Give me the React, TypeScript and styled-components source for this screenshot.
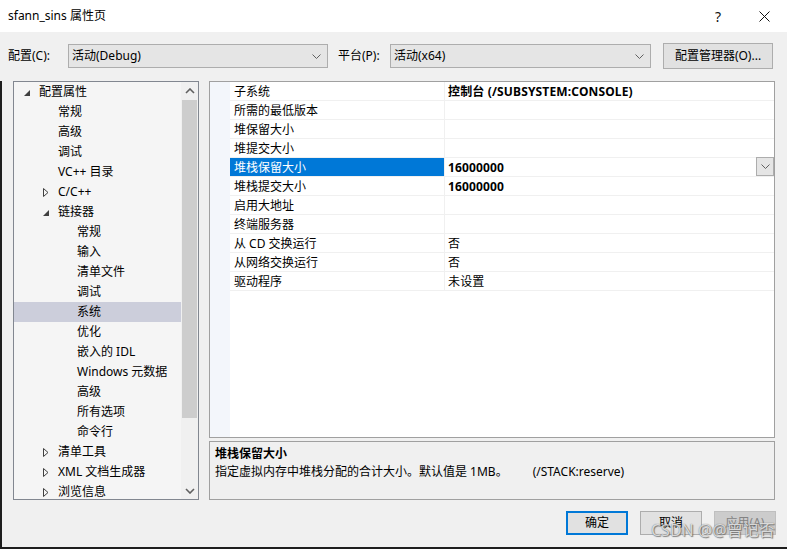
import React from "react";
import styled, { createGlobalStyle } from "styled-components";

const GlobalStyle = createGlobalStyle`
  html, body { margin: 0; padding: 0; background: #1e1e1e; }
  body {
    font-family: "Segoe UI", "Noto Sans", "Noto Sans CJK SC", sans-serif;
    font-size: 12px;
    color: #000;
  }
  * { box-sizing: border-box; }
`;

const Window = styled.div`
  position: relative;
  width: 787px;
  height: 548px;
  background: #f0f0f0;
  display: flex;
  flex-direction: column;
  overflow: hidden;
`;

const TitleBar = styled.div`
  height: 32px;
  background: #fff;
  display: flex;
  align-items: center;
  padding-left: 8px;
`;

const TitleText = styled.span`
  flex: 1;
  font-size: 12px;
  line-height: 16px;
`;

const TitleButton = styled.div`
  width: 46px;
  height: 32px;
  display: flex;
  align-items: center;
  justify-content: center;
  font-size: 14px;
  color: #111;
`;

const Toolbar = styled.div`
  height: 49px;
  padding: 11px 0 0 8px;
  display: flex;
  align-items: flex-start;
`;

const ToolRow = styled.div`
  height: 26px;
  display: flex;
  align-items: center;
`;

const Label = styled.span<{ $w: number; $ml?: number }>`
  width: ${(p) => p.$w}px;
  margin-left: ${(p) => p.$ml ?? 0}px;
  line-height: 16px;
  white-space: nowrap;
`;

const Combo = styled.div<{ $w: number }>`
  width: ${(p) => p.$w}px;
  height: 24px;
  background: #e5e5e5;
  border: 1px solid #adadad;
  display: flex;
  align-items: center;
  padding: 0 6px 0 3px;
  line-height: 16px;
`;

const ComboText = styled.span`
  flex: 1;
`;

const Spacer = styled.span<{ $w: number }>`
  width: ${(p) => p.$w}px;
`;

const Button = styled.div<{ $w: number; $default?: boolean; $disabled?: boolean; $h?: number }>`
  width: ${(p) => p.$w}px;
  height: ${(p) => p.$h ?? 24}px;
  background: ${(p) => (p.$disabled ? "#cccccc" : "#e1e1e1")};
  border: ${(p) =>
    p.$default ? "2px solid #0078d7" : p.$disabled ? "1px solid #bfbfbf" : "1px solid #adadad"};
  color: ${(p) => (p.$disabled ? "#838383" : "#000")};
  display: flex;
  align-items: center;
  justify-content: center;
  line-height: 16px;
  white-space: nowrap;
`;

const Body = styled.div`
  flex: 1;
  display: flex;
  flex-direction: column;
  border-left: 2px solid #1e1e1e;
  border-bottom: 1px solid #1e1e1e;
`;

const Main = styled.div`
  height: 419px;
  display: flex;
  padding-left: 11px;
  gap: 10px;
`;

const TreePanel = styled.div`
  width: 186px;
  height: 419px;
  border: 1px solid #828790;
  background: #f5f5f5;
  display: flex;
  overflow: hidden;
`;

const TreeList = styled.div`
  flex: 1;
  overflow: hidden;
`;

const TreeRow = styled.div<{ $level: number; $selected?: boolean }>`
  height: 20px;
  display: flex;
  align-items: center;
  padding-left: ${(p) => 6 + p.$level * 19}px;
  background: ${(p) => (p.$selected ? "#cccedb" : "transparent")};
  white-space: nowrap;
  line-height: 16px;
`;

const Expander = styled.span`
  width: 19px;
  height: 20px;
  display: flex;
  align-items: center;
  justify-content: flex-start;
  padding-left: 4px;
`;

const ScrollBar = styled.div`
  width: 17px;
  background: #f0f0f0;
  display: flex;
  flex-direction: column;
  align-items: center;
`;

const ScrollArrow = styled.div`
  width: 17px;
  height: 17px;
  display: flex;
  align-items: center;
  justify-content: center;
`;

const ScrollTrack = styled.div`
  flex: 1;
  width: 17px;
  padding: 0 1px;
`;

const ScrollThumb = styled.div`
  margin-top: 1px;
  height: 318px;
  background: #cdcdcd;
`;

const RightCol = styled.div`
  width: 566px;
  display: flex;
  flex-direction: column;
  gap: 3px;
`;

const GridPanel = styled.div`
  height: 357px;
  border: 1px solid #a0a0a0;
  background: #fff;
  display: flex;
`;

const Gutter = styled.div`
  width: 20px;
  background: #f3f6fb;
`;

const Grid = styled.div`
  flex: 1;
  display: flex;
  flex-direction: column;
`;

const GridRow = styled.div`
  height: 19px;
  display: flex;
  border-bottom: 1px solid #f0f0f0;
`;

const NameCell = styled.div<{ $selected?: boolean }>`
  width: 215px;
  padding: 1px 0 0 4px;
  display: flex;
  align-items: center;
  border-right: 1px solid #f0f0f0;
  background: ${(p) => (p.$selected ? "#0078d7" : "transparent")};
  color: ${(p) => (p.$selected ? "#fff" : "#000")};
  line-height: 16px;
  white-space: nowrap;
`;

const ValueCell = styled.div<{ $bold?: boolean }>`
  flex: 1;
  padding-left: 3px;
  display: flex;
  align-items: center;
  font-weight: ${(p) => (p.$bold ? 700 : 400)};
  line-height: 16px;
  white-space: nowrap;
`;

const ValueText = styled.span`
  flex: 1;
  padding-top: 1px;
  letter-spacing: 0.15px;
`;

const DropButton = styled.div`
  width: 18px;
  height: 19px;
  margin-top: -1px;
  background: #e5e5e5;
  border: 1px solid #adadad;
  display: flex;
  align-items: center;
  justify-content: center;
`;

const DescPanel = styled.div`
  height: 59px;
  border: 1px solid #a0a0a0;
  background: #f0f0f0;
  padding: 3px 0 0 5px;
  display: flex;
  flex-direction: column;
`;

const DescTitle = styled.div`
  font-weight: 700;
  line-height: 18px;
`;

const DescText = styled.div`
  line-height: 18px;
  white-space: pre;
`;

const Footer = styled.div`
  flex: 1;
  display: flex;
  justify-content: flex-end;
  padding: 11px 11px 0 0;
  gap: 12px;
`;

const Watermark = styled.div`
  position: absolute;
  left: 651px;
  top: 519px;
  font-family: "Noto Sans", "Noto Sans CJK SC", sans-serif;
  font-size: 16px;
  line-height: 22px;
  color: rgba(255, 255, 255, 0.75);
  text-shadow: 0 0 1px rgba(80, 80, 80, 0.9), 1px 1px 1px rgba(90, 90, 90, 0.7);
  white-space: nowrap;
  pointer-events: none;
`;

const Chevron = ({ up, color = "#606060", w = 9 }: { up?: boolean; color?: string; w?: number }) => (
  <svg width={w} height={5} viewBox="0 0 9 5">
    <polyline
      points={up ? "0.5,4.5 4.5,0.5 8.5,4.5" : "0.5,0.5 4.5,4.5 8.5,0.5"}
      fill="none"
      stroke={color}
      strokeWidth={1}
    />
  </svg>
);

const BoldChevron = ({ up }: { up?: boolean }) => (
  <svg width={10} height={6} viewBox="0 0 10 6">
    <polyline
      points={up ? "1,5 5,1 9,5" : "1,1 5,5 9,1"}
      fill="none"
      stroke="#606060"
      strokeWidth={1.6}
    />
  </svg>
);

const ExpandedIcon = () => (
  <svg width={7} height={7} viewBox="0 0 7 7" style={{ marginTop: 3 }}>
    <polygon points="6,0 6,6 0,6" fill="#404040" />
  </svg>
);

const CollapsedIcon = () => (
  <svg width={6} height={9} viewBox="0 0 6 9" style={{ marginTop: 1 }}>
    <polygon points="0.5,0.5 5,4.5 0.5,8.5" fill="none" stroke="#404040" strokeWidth={1} />
  </svg>
);

const CloseIcon = () => (
  <svg width={11} height={11} viewBox="0 0 11 11">
    <path d="M0.5 0.5 L10.5 10.5 M10.5 0.5 L0.5 10.5" stroke="#111" strokeWidth={1} />
  </svg>
);

type TreeItem = { label: string; level: number; state?: "open" | "closed"; selected?: boolean };

const treeItems: TreeItem[] = [
  { label: "配置属性", level: 0, state: "open" },
  { label: "常规", level: 1 },
  { label: "高级", level: 1 },
  { label: "调试", level: 1 },
  { label: "VC++ 目录", level: 1 },
  { label: "C/C++", level: 1, state: "closed" },
  { label: "链接器", level: 1, state: "open" },
  { label: "常规", level: 2 },
  { label: "输入", level: 2 },
  { label: "清单文件", level: 2 },
  { label: "调试", level: 2 },
  { label: "系统", level: 2, selected: true },
  { label: "优化", level: 2 },
  { label: "嵌入的 IDL", level: 2 },
  { label: "Windows 元数据", level: 2 },
  { label: "高级", level: 2 },
  { label: "所有选项", level: 2 },
  { label: "命令行", level: 2 },
  { label: "清单工具", level: 1, state: "closed" },
  { label: "XML 文档生成器", level: 1, state: "closed" },
  { label: "浏览信息", level: 1, state: "closed" },
];

type Prop = { name: string; value?: string; bold?: boolean; selected?: boolean };

const props: Prop[] = [
  { name: "子系统", value: "控制台 (/SUBSYSTEM:CONSOLE)", bold: true },
  { name: "所需的最低版本" },
  { name: "堆保留大小" },
  { name: "堆提交大小" },
  { name: "堆栈保留大小", value: "16000000", bold: true, selected: true },
  { name: "堆栈提交大小", value: "16000000", bold: true },
  { name: "启用大地址" },
  { name: "终端服务器" },
  { name: "从 CD 交换运行", value: "否" },
  { name: "从网络交换运行", value: "否" },
  { name: "驱动程序", value: "未设置" },
];

export default function App() {
  return (
    <>
      <GlobalStyle />
      <Window>
        <TitleBar>
          <TitleText>sfann_sins 属性页</TitleText>
          <TitleButton>?</TitleButton>
          <TitleButton>
            <CloseIcon />
          </TitleButton>
        </TitleBar>

        <Toolbar>
          <ToolRow>
            <Label $w={60}>配置(C):</Label>
            <Combo $w={260}>
              <ComboText>活动(Debug)</ComboText>
              <Chevron />
            </Combo>
            <Label $w={52} $ml={10}>平台(P):</Label>
            <Combo $w={261}>
              <ComboText>活动(x64)</ComboText>
              <Chevron />
            </Combo>
            <Spacer $w={12} />
            <Button $w={110} $h={26}>配置管理器(O)...</Button>
          </ToolRow>
        </Toolbar>

        <Body>
          <Main>
            <TreePanel>
              <TreeList>
                {treeItems.map((t, i) => (
                  <TreeRow key={i} $level={t.level} $selected={t.selected}>
                    <Expander>
                      {t.state === "open" && <ExpandedIcon />}
                      {t.state === "closed" && <CollapsedIcon />}
                    </Expander>
                    {t.label}
                  </TreeRow>
                ))}
              </TreeList>
              <ScrollBar>
                <ScrollArrow>
                  <BoldChevron up />
                </ScrollArrow>
                <ScrollTrack>
                  <ScrollThumb />
                </ScrollTrack>
                <ScrollArrow>
                  <BoldChevron />
                </ScrollArrow>
              </ScrollBar>
            </TreePanel>

            <RightCol>
              <GridPanel>
                <Gutter />
                <Grid>
                  {props.map((p, i) => (
                    <GridRow key={i}>
                      <NameCell $selected={p.selected}>{p.name}</NameCell>
                      <ValueCell $bold={p.bold}>
                        <ValueText>{p.value ?? ""}</ValueText>
                        {p.selected && (
                          <DropButton>
                            <Chevron w={9} />
                          </DropButton>
                        )}
                      </ValueCell>
                    </GridRow>
                  ))}
                </Grid>
              </GridPanel>
              <DescPanel>
                <DescTitle>堆栈保留大小</DescTitle>
                <DescText>{"指定虚拟内存中堆栈分配的合计大小。默认值是 1MB。        (/STACK:reserve)"}</DescText>
              </DescPanel>
            </RightCol>
          </Main>

          <Footer>
            <Button $w={62} $default>确定</Button>
            <Button $w={62}>取消</Button>
            <Button $w={62} $disabled>应用(A)</Button>
          </Footer>
        </Body>
        <Watermark>CSDN @@曾记否</Watermark>
      </Window>
    </>
  );
}
